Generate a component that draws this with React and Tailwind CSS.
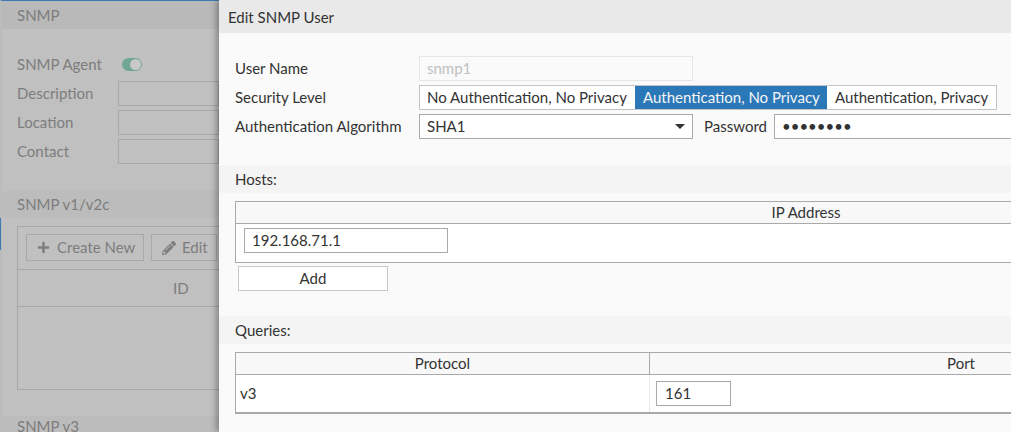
import React from 'react';
import { FaPlus, FaPencilAlt } from 'react-icons/fa';

const Field = ({ label }) => (
  <div className="flex h-[25px] items-center mb-1">
    <span className="w-[101px] shrink-0">{label}</span>
    <div className="h-[25px] w-[200px] border border-[#a8a8a8]" />
  </div>
);

const Background = () => (
  <div className="w-[219px] shrink-0 h-full bg-[#c0c0c0] text-[#7d7d7d] relative border-l-2 border-t border-l-[#bbbbbb] border-t-[#3d7ab5]">
    <div className="absolute -left-[2px] top-[217px] h-[32px] w-[1px] bg-[#3d7ab5]" />
    <div className="h-[28px] bg-[#b9b9b9] pl-[15px] leading-[28px]">SNMP</div>
    <div className="pl-[15px] pt-[23px]">
      <div className="flex h-[25px] items-center mb-1">
        <span className="w-[105px] shrink-0">SNMP Agent</span>
        <div className="relative h-[13px] w-[20px] rounded-full bg-[#6fa695]">
          <div className="absolute right-[1px] top-[1px] h-[11px] w-[11px] rounded-full bg-[#c8c8c8]" />
        </div>
      </div>
      <Field label="Description" />
      <Field label="Location" />
      <Field label="Contact" />
    </div>
    <div className="mt-[27px] h-[26px] bg-[#bcbcbc] pl-[15px] leading-[26px]">SNMP v1/v2c</div>
    <div className="ml-[15px] mt-[9px] h-[164px] w-[240px] border border-[#a8a8a8]">
      <div className="flex h-[43px] gap-[7px] border-b border-[#a8a8a8] pl-[8px] pt-[7px]">
        <div className="flex h-[27px] w-[118px] shrink-0 items-center gap-[7px] border border-[#a8a8a8] pl-[10px]">
          <FaPlus size={13} className="text-[#7d7d7d]" />
          <span>Create New</span>
        </div>
        <div className="flex h-[27px] w-[66px] shrink-0 items-center gap-[6px] border border-[#a8a8a8] pl-[10px]">
          <FaPencilAlt size={14} className="text-[#7d7d7d]" />
          <span>Edit</span>
        </div>
      </div>
      <div className="h-[37px] border-b border-[#a8a8a8] pl-[155px] leading-[36px]">ID</div>
    </div>
    <div className="mt-[26px] h-[28px] bg-[#bcbcbc] pl-[15px] leading-[20px]">SNMP v3</div>
  </div>
);

const Label = ({ children }) => <span className="w-[184px] shrink-0">{children}</span>;

const Strip = ({ children }) => (
  <div className="h-[28px] bg-[#f4f4f4] pl-[16px] leading-[28px]">{children}</div>
);

const Modal = () => (
  <div className="relative z-10 h-full w-[792px] shrink-0 bg-[#fafafa] text-[#333333] shadow-[-3px_0_6px_rgba(0,0,0,0.3)]">
    <div className="h-[33px] bg-[#e9e9e9] pl-[9px] leading-[35px]">Edit SNMP User</div>

    <div className="px-[16px] pt-[23px]">
      <div className="flex h-[25px] items-center">
        <Label>User Name</Label>
        <div className="flex h-[25px] w-[274px] items-center border border-[#e6e6e6] pl-[7px] text-[#c0c0c0]">snmp1</div>
      </div>
      <div className="mt-[4px] flex h-[25px] items-center">
        <Label>Security Level</Label>
        <div className="flex h-[25px] border border-[#c4c4c4] bg-white">
          <div className="w-[215px] shrink-0 pl-[7px] leading-[23px]">No Authentication, No Privacy</div>
          <div className="w-[192px] shrink-0 bg-[#2b78b8] pl-[8px] leading-[23px] text-[#f5f5f5]">Authentication, No Privacy</div>
          <div className="w-[169px] shrink-0 pl-[8px] leading-[23px]">Authentication, Privacy</div>
        </div>
      </div>
      <div className="mt-[4px] flex h-[25px] items-center">
        <Label>Authentication Algorithm</Label>
        <div className="relative flex h-[25px] w-[274px] shrink-0 items-center border border-[#a9a9a9] bg-white pl-[7px]">
          SHA1
          <div className="absolute right-[7px] top-[9px] h-0 w-0 border-x-[5px] border-t-[5px] border-x-transparent border-t-[#333333]" />
        </div>
        <span className="ml-[11px] w-[70px] shrink-0">Password</span>
        <div className="flex h-[25px] w-[300px] shrink-0 items-center border border-[#a9a9a9] bg-white pl-[7px]">••••••••</div>
      </div>
    </div>

    <div className="mt-[26px]"><Strip>Hosts:</Strip></div>
    <div className="pl-[16px] pt-[8px]">
      <div className="w-[1142px] border border-[#a9a9a9] bg-white">
        <div className="h-[22px] border-b border-[#a9a9a9] bg-[#f8f8f8] text-center leading-[21px]">IP Address</div>
        <div className="h-[38px] pl-[8px] pt-[4px]">
          <div className="flex h-[25px] w-[204px] items-center border border-[#a9a9a9] pl-[7px]">192.168.71.1</div>
        </div>
      </div>
      <div className="ml-[3px] mt-[3px] flex h-[25px] w-[150px] items-center justify-center border border-[#c8c8c8] bg-white">Add</div>
    </div>

    <div className="mt-[25px]"><Strip>Queries:</Strip></div>
    <div className="pl-[16px] pt-[8px]">
      <div className="w-[1038px] border border-[#a9a9a9] border-b-2 bg-white">
        <div className="flex h-[22px] border-b border-[#a9a9a9] bg-[#f8f8f8] leading-[21px]">
          <div className="w-[414px] shrink-0 border-r border-[#a9a9a9] text-center">Protocol</div>
          <div className="flex-1 text-center">Port</div>
        </div>
        <div className="flex h-[37px]">
          <div className="w-[414px] shrink-0 border-r border-[#e8e8e8] pl-[4px] leading-[37px]">v3</div>
          <div className="pl-[6px] pt-[6px]">
            <div className="flex h-[25px] w-[75px] items-center border border-[#a9a9a9] pl-[8px]">161</div>
          </div>
        </div>
      </div>
    </div>
  </div>
);

const App = () => (
  <div className="flex h-[432px] w-[1011px] overflow-hidden font-['Lato',sans-serif] text-[15px]">
    <Background />
    <Modal />
  </div>
);

export default App;
